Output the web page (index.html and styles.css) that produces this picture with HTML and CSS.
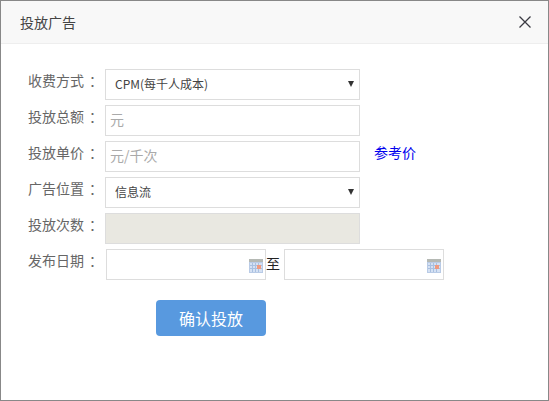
FILE: index.html
```html
<!DOCTYPE html>
<html lang="zh-CN">

<head>
    <meta charset="UTF-8">
    <title>投放广告</title>
    <link rel="stylesheet" href="styles.css">
</head>

<body>
    <div class="dialog">
        <div class="dialog-header">
            <h1>投放广告</h1>
            <button class="close-btn" type="button" aria-label="close">
                <svg width="12" height="12" viewBox="0 0 12 12">
                    <path d="M0.5 0.5L11.5 11.5M11.5 0.5L0.5 11.5" stroke="#3a3a42" stroke-width="1.3" fill="none" />
                </svg>
            </button>
        </div>
        <form class="dialog-form">
            <div class="form-row">
                <label>收费方式<span class="colon">：</span></label>
                <div class="select-box">
                    <select>
                        <option>CPM(每千人成本)</option>
                    </select>
                </div>
            </div>
            <div class="form-row">
                <label>投放总额<span class="colon">：</span></label>
                <input class="field" type="text" placeholder="元">
            </div>
            <div class="form-row">
                <label>投放单价<span class="colon">：</span></label>
                <input class="field" type="text" placeholder="元/千次">
                <a class="ref-link" href="#">参考价</a>
            </div>
            <div class="form-row">
                <label>广告位置<span class="colon">：</span></label>
                <div class="select-box">
                    <select>
                        <option>信息流</option>
                    </select>
                </div>
            </div>
            <div class="form-row">
                <label>投放次数<span class="colon">：</span></label>
                <input class="field" type="text" disabled>
            </div>
            <div class="form-row">
                <label>发布日期<span class="colon">：</span></label>
                <div class="date-range">
                    <div class="date-box">
                        <svg class="cal-icon" width="14" height="14" viewBox="0 0 14 14">
                            <rect x="0" y="0" width="14" height="14" fill="#b9cbe6" />
                            <rect x="0" y="0" width="14" height="3" fill="#b5b9b4" />
                            <rect x="1" y="4" width="12" height="9" fill="#d5e1f3" />
                            <path d="M1 6.5H13M1 9.5H13M3.5 4V13M6.5 4V13M9.5 4V13" stroke="#a9c0e0" stroke-width="1" />
                            <rect x="8" y="6" width="4" height="4" fill="#ee9a80" />
                        </svg>
                    </div>
                    <span class="date-sep">至</span>
                    <div class="date-box">
                        <svg class="cal-icon" width="14" height="14" viewBox="0 0 14 14">
                            <rect x="0" y="0" width="14" height="14" fill="#b9cbe6" />
                            <rect x="0" y="0" width="14" height="3" fill="#b5b9b4" />
                            <rect x="1" y="4" width="12" height="9" fill="#d5e1f3" />
                            <path d="M1 6.5H13M1 9.5H13M3.5 4V13M6.5 4V13M9.5 4V13" stroke="#a9c0e0" stroke-width="1" />
                            <rect x="8" y="6" width="4" height="4" fill="#ee9a80" />
                        </svg>
                    </div>
                </div>
            </div>
            <button class="submit-btn" type="button">确认投放</button>
        </form>
    </div>
</body>

</html>
```

FILE: styles.css
```css
* {
    box-sizing: border-box;
}

html,
body {
    margin: 0;
    height: 100%;
}

body {
    font-family: "Noto Sans CJK SC", "Liberation Sans", sans-serif;
    color: #555;
    background-color: #fff;
}

.dialog {
    width: 549px;
    height: 401px;
    border: 1px solid #888;
    background-color: #fff;
}

.dialog-header {
    height: 43px;
    padding: 0 17px 0 19px;
    background-color: #f8f8f8;
    border-bottom: 1px solid #eee;
    display: flex;
    justify-content: space-between;
    align-items: center;
}

.dialog-header h1 {
    margin: 0;
    font-size: 14px;
    font-weight: normal;
    color: #444;
}

.close-btn {
    display: flex;
    padding: 0;
    border: none;
    background: none;
}

.dialog-form {
    padding: 25px 0 0 27px;
}

.form-row {
    height: 31px;
    margin-bottom: 5px;
    display: flex;
    align-items: center;
}

.form-row label {
    width: 77px;
    font-size: 14px;
    color: #666;
    white-space: nowrap;
    margin-top: -10px;
}

.colon {
    margin-left: 5px;
}

.field,
.select-box select {
    width: 255px;
    height: 31px;
    border: 1px solid #ddd;
    background-color: #fff;
    font-family: inherit;
}

.field {
    padding: 0 4px 4px;
    font-size: 14px;
}

.field::placeholder {
    color: #aaa;
}

.field:disabled {
    background-color: #e9e8e1;
}

.select-box {
    position: relative;
}

.select-box select {
    display: block;
    padding: 0 9px 2px;
    font-size: 12px;
    color: #444;
    appearance: none;
    border-radius: 0;
}

.select-box::after {
    content: "";
    position: absolute;
    top: 12px;
    right: 6px;
    border-style: solid;
    border-width: 6px 3.5px 0;
    border-color: #333 transparent transparent;
}

.ref-link {
    margin-left: 14px;
    margin-top: -10px;
    font-size: 14px;
    color: #0000ee;
    text-decoration: none;
}

.date-range {
    margin-left: 1px;
    display: flex;
    align-items: center;
}

.date-box {
    width: 160px;
    height: 31px;
    border: 1px solid #ddd;
    background-color: #fff;
    display: flex;
    justify-content: flex-end;
    align-items: center;
    padding: 2px 2px 0 0;
}

.date-sep {
    width: 18px;
    font-size: 14px;
    color: #222;
    margin-top: -4px;
}

.submit-btn {
    display: block;
    width: 110px;
    height: 36px;
    margin: 20px 0 0 128px;
    border: none;
    border-radius: 4px;
    background-color: #5899df;
    color: #fff;
    font-family: inherit;
    font-size: 16px;
}
```
